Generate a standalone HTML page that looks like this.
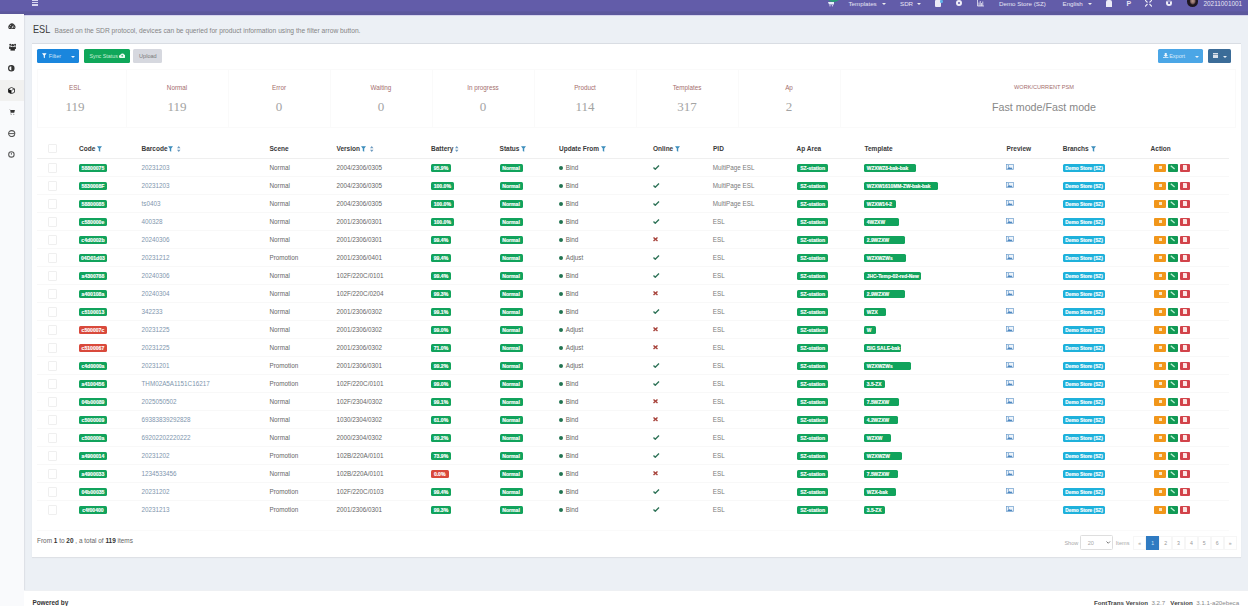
<!DOCTYPE html><html><head><meta charset="utf-8"><style>
*{box-sizing:border-box;margin:0;padding:0}
html,body{width:1248px;height:606px;overflow:hidden;background:#ecf0f5;font-family:"Liberation Sans",sans-serif;position:relative}
.a{position:absolute;white-space:nowrap}
.stv.sans{font-family:"Liberation Sans",sans-serif}
.ic{position:absolute;display:block}
#hdr{position:absolute;left:0;top:0;width:1248px;height:14.6px;background:linear-gradient(#625ca9 0,#625ca9 10.5px,#5c589c 12px,#5c589c 100%);box-shadow:0 1px 0 #d6d4ee}
#side{position:absolute;left:0;top:14px;width:24px;height:592px;background:#f9fafc;box-shadow:1px 0 1px rgba(0,0,20,.06)}
#box{position:absolute;left:32px;top:43px;width:1208.5px;height:514px;background:#fff;border-top:1px solid #d9dde3;box-shadow:0 1px 1px rgba(0,0,0,.06),-0.5px 0 1px rgba(0,0,0,.04)}
#foot{position:absolute;left:24px;top:590px;width:1224px;height:16px;background:#fff;border-top:1px solid #eef0f3}
.bd{position:absolute;height:8.4px;border-radius:1.5px;color:#fff;font-weight:bold;font-size:5.1px;line-height:9.2px;-webkit-text-stroke:0.15px #fff;text-align:center;white-space:nowrap;overflow:hidden}
.g{background:#11a35c}
.r{background:#d9493b}
.td{position:absolute;white-space:nowrap;font-size:6.3px;line-height:8px;color:#666}
.th{position:absolute;white-space:nowrap;font-size:6.5px;line-height:8px;color:#3a3a3a;font-weight:bold}
.lk{color:#8096ae}
.cb{position:absolute;width:9.5px;height:9.5px;border:1px solid #efefef;border-radius:1px;background:#fff}
.hl{position:absolute;left:37px;width:1192px;height:1px;background:#f8f8f8}
.st{position:absolute;top:69px;height:58.5px;border:1px solid #fafafa}
.stl{position:absolute;font-size:6.3px;color:#a46e6e;text-align:center;line-height:9px}
.stv{position:absolute;font-family:"Liberation Serif",serif;font-size:13px;color:#a3a3a3;text-align:center;line-height:12px}
.nv{position:absolute;top:0;font-size:6.2px;line-height:8px;color:#e6e4f4;white-space:nowrap}
.car{position:absolute;width:0;height:0;border-left:2.2px solid transparent;border-right:2.2px solid transparent;border-top:2.4px solid #eee}
.sb{position:absolute;left:8.5px;width:7px;height:7px}
.pg{position:absolute;top:535.5px;height:14.5px;width:13px;border:1px solid #f6f6f6;font-size:5.2px;line-height:12.5px;text-align:center;color:#999}
</style></head><body>

<div id="hdr"></div>
<div id="side"></div>
<div class="a" style="left:0;top:80px;width:24px;height:20.5px;background:#f1f1f0"></div>
<div id="box"></div>
<div id="foot"></div>
<div class="a" style="left:32px;top:0;width:6px;height:6px;background:repeating-linear-gradient(#d8d6f0 0 1px,#615ca9 1px 1.8px)"></div>
<div class="a" style="left:827.5px;top:-4px;width:11px;height:6px;border-radius:50%;background:#2a9a78"></div>
<svg class="ic" style="left:828px;top:2px" width="6" height="4.5" viewBox="0 0 12 9"><path d="M0 0H12V5H2Z" fill="#e6f0fa"/><circle cx="4" cy="7.5" r="1.3" fill="#d8d0f0"/><circle cx="9" cy="7.5" r="1.3" fill="#d8d0f0"/></svg>
<div class="nv" style="left:848.5px">Templates</div>
<div class="car" style="left:881.5px;top:3px"></div>
<div class="nv" style="left:900px">SDR</div>
<div class="car" style="left:916.5px;top:3px"></div>
<div class="a" style="left:934.5px;top:0px;width:6.5px;height:6.5px;background:#eceaf6;border-radius:1px"></div>
<div class="a" style="left:940px;top:0px;width:2.5px;height:2.5px;background:#5fb0e8;border-radius:50%"></div>
<div class="a" style="left:955.8px;top:-0.2px;width:6px;height:6px;border-radius:50%;border:2.2px solid #f0eef8"></div>
<svg class="ic" style="left:976.5px;top:0" width="7" height="6.5" viewBox="0 0 14 13"><path d="M1 0V12H14" fill="none" stroke="#e8e6f4" stroke-width="1.6"/><path d="M4 12V5M6.5 12V2M9 12V6M11.5 12V3" stroke="#e8e6f4" stroke-width="1.6"/></svg>
<div class="nv" style="left:999px">Demo Store (SZ)</div>
<div class="nv" style="left:1062.5px">English</div>
<div class="car" style="left:1087.5px;top:3px"></div>
<div class="a" style="left:1106px;top:0;width:5.5px;height:6.5px;background:#ecebf6;border-radius:2px 2px 0 0"></div>
<div class="nv" style="left:1126.5px;font-size:7px;font-weight:bold">P</div>
<svg class="ic" style="left:1145px;top:0" width="7" height="6.5" viewBox="0 0 14 13"><path d="M0 0L5 5M14 0L9 5M0 13L5 8M14 13L9 8" stroke="#eeedf8" stroke-width="2.2"/></svg>
<div class="a" style="left:1166px;top:0px;width:6px;height:6px;border-radius:50%;border:2px solid #eeedf8;border-top-color:#9995c8"></div>
<div class="a" style="left:1186.5px;top:-4px;width:11.5px;height:11px;border-radius:50%;background:radial-gradient(ellipse 30% 36% at 52% 45%,#b89a90 0,#8a6a66 60%,#1e1620 100%)"></div>
<div class="nv" style="left:1203.5px;font-size:6.4px">20211001001</div>
<svg class="ic" style="left:8.4px;top:22.6px" width="7.8" height="6.6" viewBox="0 0 16 12.5"><path d="M2.2 12A7.2 7.2 0 1 1 13.8 12Z" fill="#3a3a3a"/><path d="M8 10.5L10.8 5.2" stroke="#f9fafc" stroke-width="1.8"/><circle cx="3.5" cy="8" r="1" fill="#f9fafc"/><circle cx="12.5" cy="8" r="1" fill="#f9fafc"/><circle cx="5" cy="4.6" r="1" fill="#f9fafc"/></svg>
<svg class="ic" style="left:8.6px;top:43px" width="7.4" height="7.6" viewBox="0 0 15 15.4"><circle cx="7.5" cy="4.6" r="2.7" fill="#333"/><circle cx="2.6" cy="3.6" r="2.1" fill="#333"/><circle cx="12.4" cy="3.6" r="2.1" fill="#333"/><path d="M0 7H4V12H0Z M11 7H15V12H11Z" fill="#444"/><path d="M3 8.2H12V15.4H3Z" fill="#2a2a2a"/></svg>
<svg class="ic" style="left:8.1px;top:65.3px" width="6.6" height="6.6" viewBox="0 0 13 13"><circle cx="6.5" cy="6.5" r="5.3" fill="none" stroke="#333" stroke-width="2.3"/><path d="M6.5 1.2A5.3 5.3 0 0 1 6.5 11.8Z" fill="#333"/></svg>
<svg class="ic" style="left:8.4px;top:87px" width="7" height="7" viewBox="0 0 14 14"><path d="M7 1L13 3.8V10.6L7 13.4L1 10.6V3.8Z" fill="#f7f7f7" stroke="#222" stroke-width="1.6"/><path d="M1 3.8L7 6.8V13.4L1 10.6Z" fill="#111"/><path d="M7 6.8L13 3.8" stroke="#222" stroke-width="1.3"/></svg>
<svg class="ic" style="left:9.2px;top:108.6px" width="6" height="6" viewBox="0 0 12 12"><path d="M0 0.8H2.3L3.3 7.5H10.5L11.8 1.8H2.5Z" fill="#333"/><path d="M3.3 7.5V9" stroke="#555" stroke-width="1"/><circle cx="4.3" cy="10.6" r="1.1" fill="#666"/><circle cx="9.6" cy="10.6" r="1.1" fill="#666"/></svg>
<svg class="ic" style="left:8.3px;top:129.8px" width="7.4" height="7.2" viewBox="0 0 15 14.6"><ellipse cx="7.5" cy="7.3" rx="6.3" ry="6.1" fill="none" stroke="#555" stroke-width="2.2"/><path d="M1.5 7.3H13.5" stroke="#555" stroke-width="2"/></svg>
<svg class="ic" style="left:8.3px;top:151px" width="6.8" height="6.8" viewBox="0 0 13 13"><circle cx="6.5" cy="6.5" r="5.2" fill="none" stroke="#555" stroke-width="2"/><path d="M6.5 3.5V7" stroke="#555" stroke-width="1.8"/></svg>
<div class="a" style="left:32.8px;top:23px;font-size:11px;line-height:12px;color:#3a3a3a;transform:scaleX(0.83);transform-origin:0 0">ESL</div>
<div class="a" style="left:54.5px;top:25.5px;font-size:6.68px;line-height:9px;color:#858585">Based on the SDR protocol, devices can be queried for product information using the filter arrow button.</div>
<div class="a" style="left:37px;top:49px;width:41.5px;height:14px;background:#1a86dd;border-radius:1.5px"></div>
<svg class="ic" style="left:42px;top:53.3px" width="4.6" height="5.4" viewBox="0 0 9 10"><path d="M0 0H9L5.6 4.5V10L3.4 8.5V4.5Z" fill="#fff"/></svg>
<div class="a" style="left:48.8px;top:52px;font-size:5.5px;line-height:8px;color:#cfe6fb">Filter</div>
<div class="car" style="left:70.5px;top:55.5px;border-top-color:#e8f2fc"></div>
<div class="a" style="left:84px;top:49px;width:46px;height:14.3px;background:#0fa75a;border-radius:1.5px"></div>
<div class="a" style="left:89.4px;top:52px;font-size:5.35px;line-height:8px;color:#c8efd8">Sync Status</div>
<svg class="ic" style="left:119px;top:53px" width="6.4" height="5" viewBox="0 0 13 10"><path d="M3 10A3 3 0 0 1 2.5 4A4.5 4.5 0 0 1 11 3.5A3.2 3.2 0 0 1 10.5 10Z" fill="#eafaf0"/><path d="M6.5 8V4.5M4.8 6L6.5 4.3L8.2 6" stroke="#0fa75a" stroke-width="1.2" fill="none"/></svg>
<div class="a" style="left:133.4px;top:49px;width:28.5px;height:14px;background:#d6d8df;border-radius:1.5px"></div>
<div class="a" style="left:139px;top:52px;font-size:5.6px;line-height:8px;color:#7a7a7a">Upload</div>
<div class="a" style="left:1158px;top:49px;width:44.6px;height:14px;background:#4ba6e6;border-radius:1.5px"></div>
<svg class="ic" style="left:1163px;top:52.6px" width="5.5" height="5" viewBox="0 0 11 10"><path d="M3.5 0H7.5V4H10L5.5 8L1 4H3.5Z" fill="#eef6fd"/><path d="M0 8.5H11V10H0Z" fill="#eef6fd"/></svg>
<div class="a" style="left:1169.2px;top:52px;font-size:5.5px;line-height:8px;color:#dcedfb">Export</div>
<div class="car" style="left:1195px;top:55.5px;border-top-color:#e8f2fc"></div>
<div class="a" style="left:1208px;top:49px;width:23px;height:14px;background:#3b6c98;border-radius:1.5px"></div>
<div class="a" style="left:1212.8px;top:53.3px;width:5.5px;height:5px;background:repeating-linear-gradient(#d8e0ea 0 1.2px,#7f9ab5 1.2px 1.7px)"></div>
<div class="car" style="left:1222.5px;top:55.5px;border-top-color:#e8eef5"></div>
<div class="st" style="left:37px;width:90px"></div>
<div class="stl" style="left:24px;width:102px;top:83px">ESL</div>
<div class="stv" style="left:24px;width:102px;top:101px">119</div>
<div class="st" style="left:126px;width:103px"></div>
<div class="stl" style="left:126px;width:102px;top:83px">Normal</div>
<div class="stv" style="left:126px;width:102px;top:101px">119</div>
<div class="st" style="left:228px;width:103px"></div>
<div class="stl" style="left:228px;width:102px;top:83px">Error</div>
<div class="stv" style="left:228px;width:102px;top:101px">0</div>
<div class="st" style="left:330px;width:103px"></div>
<div class="stl" style="left:330px;width:102px;top:83px">Waiting</div>
<div class="stv" style="left:330px;width:102px;top:101px">0</div>
<div class="st" style="left:432px;width:103px"></div>
<div class="stl" style="left:432px;width:102px;top:83px">In progress</div>
<div class="stv" style="left:432px;width:102px;top:101px">0</div>
<div class="st" style="left:534px;width:103px"></div>
<div class="stl" style="left:534px;width:102px;top:83px">Product</div>
<div class="stv" style="left:534px;width:102px;top:101px">114</div>
<div class="st" style="left:636px;width:103px"></div>
<div class="stl" style="left:636px;width:102px;top:83px">Templates</div>
<div class="stv" style="left:636px;width:102px;top:101px">317</div>
<div class="st" style="left:738px;width:103px"></div>
<div class="stl" style="left:738px;width:102px;top:83px">Ap</div>
<div class="stv" style="left:738px;width:102px;top:101px">2</div>
<div class="st" style="left:840px;width:396px"></div>
<div class="stl" style="left:840px;width:408px;top:83px;font-size:5.6px">WORK/CURRENT PSM</div>
<div class="stv sans" style="left:840px;width:408px;top:101px;font-size:10.7px;color:#888">Fast mode/Fast mode</div>
<div class="cb" style="left:47.5px;top:143.9px"></div>
<div class="th" style="left:79px;top:145.0px">Code</div>
<svg class="ic" style="left:96.6px;top:145.7px" width="5" height="6" viewBox="0 0 9 10"><path d="M0 0H9L5.8 4.3V10L3.2 8.5V4.3Z" fill="#3c8dbc"/></svg>
<div class="th" style="left:141.5px;top:145.0px">Barcode</div>
<svg class="ic" style="left:168.2px;top:145.7px" width="5" height="6" viewBox="0 0 9 10"><path d="M0 0H9L5.8 4.3V10L3.2 8.5V4.3Z" fill="#3c8dbc"/></svg>
<svg class="ic" style="left:177px;top:145.6px" width="3.5" height="6" viewBox="0 0 7 12"><path d="M3.5 0L7 4.5H0Z M3.5 12L7 7.5H0Z" fill="#6f9bbf"/></svg>
<div class="th" style="left:269.5px;top:145.0px">Scene</div>
<div class="th" style="left:336.5px;top:145.0px">Version</div>
<svg class="ic" style="left:360.8px;top:145.7px" width="5" height="6" viewBox="0 0 9 10"><path d="M0 0H9L5.8 4.3V10L3.2 8.5V4.3Z" fill="#3c8dbc"/></svg>
<svg class="ic" style="left:370px;top:145.6px" width="3.5" height="6" viewBox="0 0 7 12"><path d="M3.5 0L7 4.5H0Z M3.5 12L7 7.5H0Z" fill="#6f9bbf"/></svg>
<div class="th" style="left:431px;top:145.0px">Battery</div>
<svg class="ic" style="left:455px;top:145.6px" width="3.5" height="6" viewBox="0 0 7 12"><path d="M3.5 0L7 4.5H0Z M3.5 12L7 7.5H0Z" fill="#6f9bbf"/></svg>
<div class="th" style="left:499.6px;top:145.0px">Status</div>
<svg class="ic" style="left:520.6px;top:145.7px" width="5" height="6" viewBox="0 0 9 10"><path d="M0 0H9L5.8 4.3V10L3.2 8.5V4.3Z" fill="#3c8dbc"/></svg>
<div class="th" style="left:559px;top:145.0px">Update From</div>
<svg class="ic" style="left:600.5px;top:145.7px" width="5" height="6" viewBox="0 0 9 10"><path d="M0 0H9L5.8 4.3V10L3.2 8.5V4.3Z" fill="#3c8dbc"/></svg>
<div class="th" style="left:653px;top:145.0px">Online</div>
<svg class="ic" style="left:675px;top:145.7px" width="5" height="6" viewBox="0 0 9 10"><path d="M0 0H9L5.8 4.3V10L3.2 8.5V4.3Z" fill="#3c8dbc"/></svg>
<div class="th" style="left:713px;top:145.0px">PID</div>
<div class="th" style="left:796.5px;top:145.0px">Ap Area</div>
<div class="th" style="left:864.5px;top:145.0px">Template</div>
<div class="th" style="left:1006.5px;top:145.0px">Preview</div>
<div class="th" style="left:1062.7px;top:145.0px">Branchs</div>
<svg class="ic" style="left:1090.8px;top:145.7px" width="5" height="6" viewBox="0 0 9 10"><path d="M0 0H9L5.8 4.3V10L3.2 8.5V4.3Z" fill="#3c8dbc"/></svg>
<div class="th" style="left:1150.6px;top:145.0px">Action</div>
<div class="hl" style="top:157.5px;background:#efefef"></div>
<div class="cb" style="left:47.5px;top:163.0px"></div>
<div class="bd g" style="left:79.2px;top:163.50px;width:27.5px;">58800075</div>
<div class="td lk" style="left:141.5px;top:163.7px">20231203</div>
<div class="td" style="left:269.5px;top:163.7px">Normal</div>
<div class="td" style="left:336.5px;top:163.7px">2004/2306/0305</div>
<div class="bd g" style="left:430.8px;top:163.50px;width:20.4px;">95.9%</div>
<div class="bd g" style="left:499.6px;top:163.50px;width:23px;">Normal</div>
<div class="a" style="left:559.2px;top:165.7px;width:3.9px;height:4px;border-radius:50%;background:#237452"></div>
<div class="td" style="left:565.7px;top:163.7px">Bind</div>
<svg class="ic" style="left:653px;top:164.9px" width="6.5" height="5" viewBox="0 0 13 10"><path d="M1 5L4.5 8.5L12 1" fill="none" stroke="#2f7358" stroke-width="2.8"/></svg>
<div class="td" style="left:712.8px;top:163.7px;color:#7a7a7a">MultiPage ESL</div>
<div class="bd g" style="left:797.3px;top:163.50px;width:30.7px;">SZ-station</div>
<div class="bd g" style="left:864.3px;top:163.50px;width:52px;font-size:4.9px;text-align:left;padding-left:2.5px">WZXWZ8-bak-bak</div>
<svg class="ic" style="left:1006.3px;top:164.2px" width="7.8" height="6" viewBox="0 0 16 12"><rect x="0.7" y="0.7" width="14.6" height="10.6" fill="#eef4fa" stroke="#6a9ccc" stroke-width="1.4"/><path d="M2.5 10L6 5.5L8.5 8L10.5 6.5L13.5 10Z" fill="#4b86c0"/><circle cx="5" cy="3.8" r="1.2" fill="#4b86c0"/></svg>
<div class="bd" style="left:1062.8px;top:163.50px;width:42.6px;background:#1eb1db;font-size:4.8px">Demo Store (SZ)</div>
<div class="a" style="left:1154.2px;top:163.5px;width:11.7px;height:8.5px;background:#f1961a;border-radius:1px"></div>
<div class="a" style="left:1158.6px;top:166.1px;width:3px;height:3.2px;background:#f9e3c0"></div>
<div class="a" style="left:1168px;top:163.5px;width:10px;height:8.5px;background:#119a55;border-radius:1px"></div>
<svg class="ic" style="left:1170.2px;top:165.1px" width="5.4" height="4.8" viewBox="0 0 11 10"><path d="M1.5 1.5L9.5 8.5" stroke="#bff0d6" stroke-width="2.6"/></svg>
<div class="a" style="left:1179.8px;top:163.5px;width:10.4px;height:8.5px;background:#d2434a;border-radius:1px"></div>
<div class="a" style="left:1183.3px;top:165.3px;width:3.4px;height:4.8px;background:#fbe4e2;border-radius:0 1px 0 0"></div>
<div class="hl" style="top:176.3px"></div>
<div class="cb" style="left:47.5px;top:181.0px"></div>
<div class="bd g" style="left:79.2px;top:181.50px;width:27.5px;">5830008F</div>
<div class="td lk" style="left:141.5px;top:181.7px">20231203</div>
<div class="td" style="left:269.5px;top:181.7px">Normal</div>
<div class="td" style="left:336.5px;top:181.7px">2004/2306/0305</div>
<div class="bd g" style="left:430.8px;top:181.50px;width:23px;">100.0%</div>
<div class="bd g" style="left:499.6px;top:181.50px;width:23px;">Normal</div>
<div class="a" style="left:559.2px;top:183.7px;width:3.9px;height:4px;border-radius:50%;background:#237452"></div>
<div class="td" style="left:565.7px;top:181.7px">Bind</div>
<svg class="ic" style="left:653px;top:182.9px" width="6.5" height="5" viewBox="0 0 13 10"><path d="M1 5L4.5 8.5L12 1" fill="none" stroke="#2f7358" stroke-width="2.8"/></svg>
<div class="td" style="left:712.8px;top:181.7px;color:#7a7a7a">MultiPage ESL</div>
<div class="bd g" style="left:797.3px;top:181.50px;width:30.7px;">SZ-station</div>
<div class="bd g" style="left:864.3px;top:181.50px;width:74px;font-size:4.9px;text-align:left;padding-left:2.5px">WZXW1610MM-ZW-bak-bak</div>
<svg class="ic" style="left:1006.3px;top:182.2px" width="7.8" height="6" viewBox="0 0 16 12"><rect x="0.7" y="0.7" width="14.6" height="10.6" fill="#eef4fa" stroke="#6a9ccc" stroke-width="1.4"/><path d="M2.5 10L6 5.5L8.5 8L10.5 6.5L13.5 10Z" fill="#4b86c0"/><circle cx="5" cy="3.8" r="1.2" fill="#4b86c0"/></svg>
<div class="bd" style="left:1062.8px;top:181.50px;width:42.6px;background:#1eb1db;font-size:4.8px">Demo Store (SZ)</div>
<div class="a" style="left:1154.2px;top:181.5px;width:11.7px;height:8.5px;background:#f1961a;border-radius:1px"></div>
<div class="a" style="left:1158.6px;top:184.1px;width:3px;height:3.2px;background:#f9e3c0"></div>
<div class="a" style="left:1168px;top:181.5px;width:10px;height:8.5px;background:#119a55;border-radius:1px"></div>
<svg class="ic" style="left:1170.2px;top:183.1px" width="5.4" height="4.8" viewBox="0 0 11 10"><path d="M1.5 1.5L9.5 8.5" stroke="#bff0d6" stroke-width="2.6"/></svg>
<div class="a" style="left:1179.8px;top:181.5px;width:10.4px;height:8.5px;background:#d2434a;border-radius:1px"></div>
<div class="a" style="left:1183.3px;top:183.3px;width:3.4px;height:4.8px;background:#fbe4e2;border-radius:0 1px 0 0"></div>
<div class="hl" style="top:194.3px"></div>
<div class="cb" style="left:47.5px;top:199.0px"></div>
<div class="bd g" style="left:79.2px;top:199.50px;width:27.5px;">58800085</div>
<div class="td lk" style="left:141.5px;top:199.7px">ts0403</div>
<div class="td" style="left:269.5px;top:199.7px">Normal</div>
<div class="td" style="left:336.5px;top:199.7px">2004/2306/0305</div>
<div class="bd g" style="left:430.8px;top:199.50px;width:23px;">100.0%</div>
<div class="bd g" style="left:499.6px;top:199.50px;width:23px;">Normal</div>
<div class="a" style="left:559.2px;top:201.7px;width:3.9px;height:4px;border-radius:50%;background:#237452"></div>
<div class="td" style="left:565.7px;top:199.7px">Bind</div>
<svg class="ic" style="left:653px;top:200.9px" width="6.5" height="5" viewBox="0 0 13 10"><path d="M1 5L4.5 8.5L12 1" fill="none" stroke="#2f7358" stroke-width="2.8"/></svg>
<div class="td" style="left:712.8px;top:199.7px;color:#7a7a7a">MultiPage ESL</div>
<div class="bd g" style="left:797.3px;top:199.50px;width:30.7px;">SZ-station</div>
<div class="bd g" style="left:864.3px;top:199.50px;width:32px;font-size:4.9px;text-align:left;padding-left:2.5px">WZXW14-2</div>
<svg class="ic" style="left:1006.3px;top:200.2px" width="7.8" height="6" viewBox="0 0 16 12"><rect x="0.7" y="0.7" width="14.6" height="10.6" fill="#eef4fa" stroke="#6a9ccc" stroke-width="1.4"/><path d="M2.5 10L6 5.5L8.5 8L10.5 6.5L13.5 10Z" fill="#4b86c0"/><circle cx="5" cy="3.8" r="1.2" fill="#4b86c0"/></svg>
<div class="bd" style="left:1062.8px;top:199.50px;width:42.6px;background:#1eb1db;font-size:4.8px">Demo Store (SZ)</div>
<div class="a" style="left:1154.2px;top:199.5px;width:11.7px;height:8.5px;background:#f1961a;border-radius:1px"></div>
<div class="a" style="left:1158.6px;top:202.1px;width:3px;height:3.2px;background:#f9e3c0"></div>
<div class="a" style="left:1168px;top:199.5px;width:10px;height:8.5px;background:#119a55;border-radius:1px"></div>
<svg class="ic" style="left:1170.2px;top:201.1px" width="5.4" height="4.8" viewBox="0 0 11 10"><path d="M1.5 1.5L9.5 8.5" stroke="#bff0d6" stroke-width="2.6"/></svg>
<div class="a" style="left:1179.8px;top:199.5px;width:10.4px;height:8.5px;background:#d2434a;border-radius:1px"></div>
<div class="a" style="left:1183.3px;top:201.3px;width:3.4px;height:4.8px;background:#fbe4e2;border-radius:0 1px 0 0"></div>
<div class="hl" style="top:212.3px"></div>
<div class="cb" style="left:47.5px;top:217.0px"></div>
<div class="bd g" style="left:79.2px;top:217.50px;width:27.5px;">c580000e</div>
<div class="td lk" style="left:141.5px;top:217.7px">400328</div>
<div class="td" style="left:269.5px;top:217.7px">Normal</div>
<div class="td" style="left:336.5px;top:217.7px">2001/2306/0301</div>
<div class="bd g" style="left:430.8px;top:217.50px;width:23px;">100.0%</div>
<div class="bd g" style="left:499.6px;top:217.50px;width:23px;">Normal</div>
<div class="a" style="left:559.2px;top:219.7px;width:3.9px;height:4px;border-radius:50%;background:#237452"></div>
<div class="td" style="left:565.7px;top:217.7px">Bind</div>
<svg class="ic" style="left:653px;top:218.9px" width="6.5" height="5" viewBox="0 0 13 10"><path d="M1 5L4.5 8.5L12 1" fill="none" stroke="#2f7358" stroke-width="2.8"/></svg>
<div class="td" style="left:712.8px;top:217.7px;color:#7a7a7a">ESL</div>
<div class="bd g" style="left:797.3px;top:217.50px;width:30.7px;">SZ-station</div>
<div class="bd g" style="left:864.3px;top:217.50px;width:35px;font-size:4.9px;text-align:left;padding-left:2.5px">4WZXW</div>
<svg class="ic" style="left:1006.3px;top:218.2px" width="7.8" height="6" viewBox="0 0 16 12"><rect x="0.7" y="0.7" width="14.6" height="10.6" fill="#eef4fa" stroke="#6a9ccc" stroke-width="1.4"/><path d="M2.5 10L6 5.5L8.5 8L10.5 6.5L13.5 10Z" fill="#4b86c0"/><circle cx="5" cy="3.8" r="1.2" fill="#4b86c0"/></svg>
<div class="bd" style="left:1062.8px;top:217.50px;width:42.6px;background:#1eb1db;font-size:4.8px">Demo Store (SZ)</div>
<div class="a" style="left:1154.2px;top:217.5px;width:11.7px;height:8.5px;background:#f1961a;border-radius:1px"></div>
<div class="a" style="left:1158.6px;top:220.1px;width:3px;height:3.2px;background:#f9e3c0"></div>
<div class="a" style="left:1168px;top:217.5px;width:10px;height:8.5px;background:#119a55;border-radius:1px"></div>
<svg class="ic" style="left:1170.2px;top:219.1px" width="5.4" height="4.8" viewBox="0 0 11 10"><path d="M1.5 1.5L9.5 8.5" stroke="#bff0d6" stroke-width="2.6"/></svg>
<div class="a" style="left:1179.8px;top:217.5px;width:10.4px;height:8.5px;background:#d2434a;border-radius:1px"></div>
<div class="a" style="left:1183.3px;top:219.3px;width:3.4px;height:4.8px;background:#fbe4e2;border-radius:0 1px 0 0"></div>
<div class="hl" style="top:230.3px"></div>
<div class="cb" style="left:47.5px;top:235.0px"></div>
<div class="bd g" style="left:79.2px;top:235.50px;width:27.5px;">c4d0002b</div>
<div class="td lk" style="left:141.5px;top:235.7px">20240306</div>
<div class="td" style="left:269.5px;top:235.7px">Normal</div>
<div class="td" style="left:336.5px;top:235.7px">2001/2306/0301</div>
<div class="bd g" style="left:430.8px;top:235.50px;width:20.4px;">99.4%</div>
<div class="bd g" style="left:499.6px;top:235.50px;width:23px;">Normal</div>
<div class="a" style="left:559.2px;top:237.7px;width:3.9px;height:4px;border-radius:50%;background:#237452"></div>
<div class="td" style="left:565.7px;top:235.7px">Bind</div>
<svg class="ic" style="left:652.9px;top:237.0px" width="5" height="4.6" viewBox="0 0 10 9.2"><path d="M1 1L9 8.2M9 1L1 8.2" stroke="#a8443c" stroke-width="2.8"/></svg>
<div class="td" style="left:712.8px;top:235.7px;color:#7a7a7a">ESL</div>
<div class="bd g" style="left:797.3px;top:235.50px;width:30.7px;">SZ-station</div>
<div class="bd g" style="left:864.3px;top:235.50px;width:41px;font-size:4.9px;text-align:left;padding-left:2.5px">2.9WZXW</div>
<svg class="ic" style="left:1006.3px;top:236.2px" width="7.8" height="6" viewBox="0 0 16 12"><rect x="0.7" y="0.7" width="14.6" height="10.6" fill="#eef4fa" stroke="#6a9ccc" stroke-width="1.4"/><path d="M2.5 10L6 5.5L8.5 8L10.5 6.5L13.5 10Z" fill="#4b86c0"/><circle cx="5" cy="3.8" r="1.2" fill="#4b86c0"/></svg>
<div class="bd" style="left:1062.8px;top:235.50px;width:42.6px;background:#1eb1db;font-size:4.8px">Demo Store (SZ)</div>
<div class="a" style="left:1154.2px;top:235.5px;width:11.7px;height:8.5px;background:#f1961a;border-radius:1px"></div>
<div class="a" style="left:1158.6px;top:238.1px;width:3px;height:3.2px;background:#f9e3c0"></div>
<div class="a" style="left:1168px;top:235.5px;width:10px;height:8.5px;background:#119a55;border-radius:1px"></div>
<svg class="ic" style="left:1170.2px;top:237.1px" width="5.4" height="4.8" viewBox="0 0 11 10"><path d="M1.5 1.5L9.5 8.5" stroke="#bff0d6" stroke-width="2.6"/></svg>
<div class="a" style="left:1179.8px;top:235.5px;width:10.4px;height:8.5px;background:#d2434a;border-radius:1px"></div>
<div class="a" style="left:1183.3px;top:237.3px;width:3.4px;height:4.8px;background:#fbe4e2;border-radius:0 1px 0 0"></div>
<div class="hl" style="top:248.3px"></div>
<div class="cb" style="left:47.5px;top:253.0px"></div>
<div class="bd g" style="left:79.2px;top:253.50px;width:27.5px;">04D01d03</div>
<div class="td lk" style="left:141.5px;top:253.7px">20231212</div>
<div class="td" style="left:269.5px;top:253.7px">Promotion</div>
<div class="td" style="left:336.5px;top:253.7px">2001/2306/0401</div>
<div class="bd g" style="left:430.8px;top:253.50px;width:20.4px;">99.4%</div>
<div class="bd g" style="left:499.6px;top:253.50px;width:23px;">Normal</div>
<div class="a" style="left:559.2px;top:255.7px;width:3.9px;height:4px;border-radius:50%;background:#237452"></div>
<div class="td" style="left:565.7px;top:253.7px">Adjust</div>
<svg class="ic" style="left:653px;top:254.9px" width="6.5" height="5" viewBox="0 0 13 10"><path d="M1 5L4.5 8.5L12 1" fill="none" stroke="#2f7358" stroke-width="2.8"/></svg>
<div class="td" style="left:712.8px;top:253.7px;color:#7a7a7a">ESL</div>
<div class="bd g" style="left:797.3px;top:253.50px;width:30.7px;">SZ-station</div>
<div class="bd g" style="left:864.3px;top:253.50px;width:42px;font-size:4.9px;text-align:left;padding-left:2.5px">WZXWZWs</div>
<svg class="ic" style="left:1006.3px;top:254.2px" width="7.8" height="6" viewBox="0 0 16 12"><rect x="0.7" y="0.7" width="14.6" height="10.6" fill="#eef4fa" stroke="#6a9ccc" stroke-width="1.4"/><path d="M2.5 10L6 5.5L8.5 8L10.5 6.5L13.5 10Z" fill="#4b86c0"/><circle cx="5" cy="3.8" r="1.2" fill="#4b86c0"/></svg>
<div class="bd" style="left:1062.8px;top:253.50px;width:42.6px;background:#1eb1db;font-size:4.8px">Demo Store (SZ)</div>
<div class="a" style="left:1154.2px;top:253.5px;width:11.7px;height:8.5px;background:#f1961a;border-radius:1px"></div>
<div class="a" style="left:1158.6px;top:256.1px;width:3px;height:3.2px;background:#f9e3c0"></div>
<div class="a" style="left:1168px;top:253.5px;width:10px;height:8.5px;background:#119a55;border-radius:1px"></div>
<svg class="ic" style="left:1170.2px;top:255.1px" width="5.4" height="4.8" viewBox="0 0 11 10"><path d="M1.5 1.5L9.5 8.5" stroke="#bff0d6" stroke-width="2.6"/></svg>
<div class="a" style="left:1179.8px;top:253.5px;width:10.4px;height:8.5px;background:#d2434a;border-radius:1px"></div>
<div class="a" style="left:1183.3px;top:255.3px;width:3.4px;height:4.8px;background:#fbe4e2;border-radius:0 1px 0 0"></div>
<div class="hl" style="top:266.3px"></div>
<div class="cb" style="left:47.5px;top:271.0px"></div>
<div class="bd g" style="left:79.2px;top:271.50px;width:27.5px;">a4300788</div>
<div class="td lk" style="left:141.5px;top:271.7px">20240306</div>
<div class="td" style="left:269.5px;top:271.7px">Normal</div>
<div class="td" style="left:336.5px;top:271.7px">102F/220C/0101</div>
<div class="bd g" style="left:430.8px;top:271.50px;width:20.4px;">99.4%</div>
<div class="bd g" style="left:499.6px;top:271.50px;width:23px;">Normal</div>
<div class="a" style="left:559.2px;top:273.7px;width:3.9px;height:4px;border-radius:50%;background:#237452"></div>
<div class="td" style="left:565.7px;top:271.7px">Bind</div>
<svg class="ic" style="left:653px;top:272.9px" width="6.5" height="5" viewBox="0 0 13 10"><path d="M1 5L4.5 8.5L12 1" fill="none" stroke="#2f7358" stroke-width="2.8"/></svg>
<div class="td" style="left:712.8px;top:271.7px;color:#7a7a7a">ESL</div>
<div class="bd g" style="left:797.3px;top:271.50px;width:30.7px;">SZ-station</div>
<div class="bd g" style="left:864.3px;top:271.50px;width:57px;font-size:4.9px;text-align:left;padding-left:2.5px">JHC-Temp-02-red-New</div>
<svg class="ic" style="left:1006.3px;top:272.2px" width="7.8" height="6" viewBox="0 0 16 12"><rect x="0.7" y="0.7" width="14.6" height="10.6" fill="#eef4fa" stroke="#6a9ccc" stroke-width="1.4"/><path d="M2.5 10L6 5.5L8.5 8L10.5 6.5L13.5 10Z" fill="#4b86c0"/><circle cx="5" cy="3.8" r="1.2" fill="#4b86c0"/></svg>
<div class="bd" style="left:1062.8px;top:271.50px;width:42.6px;background:#1eb1db;font-size:4.8px">Demo Store (SZ)</div>
<div class="a" style="left:1154.2px;top:271.5px;width:11.7px;height:8.5px;background:#f1961a;border-radius:1px"></div>
<div class="a" style="left:1158.6px;top:274.1px;width:3px;height:3.2px;background:#f9e3c0"></div>
<div class="a" style="left:1168px;top:271.5px;width:10px;height:8.5px;background:#119a55;border-radius:1px"></div>
<svg class="ic" style="left:1170.2px;top:273.1px" width="5.4" height="4.8" viewBox="0 0 11 10"><path d="M1.5 1.5L9.5 8.5" stroke="#bff0d6" stroke-width="2.6"/></svg>
<div class="a" style="left:1179.8px;top:271.5px;width:10.4px;height:8.5px;background:#d2434a;border-radius:1px"></div>
<div class="a" style="left:1183.3px;top:273.3px;width:3.4px;height:4.8px;background:#fbe4e2;border-radius:0 1px 0 0"></div>
<div class="hl" style="top:284.3px"></div>
<div class="cb" style="left:47.5px;top:289.0px"></div>
<div class="bd g" style="left:79.2px;top:289.50px;width:27.5px;">a400108a</div>
<div class="td lk" style="left:141.5px;top:289.7px">20240304</div>
<div class="td" style="left:269.5px;top:289.7px">Normal</div>
<div class="td" style="left:336.5px;top:289.7px">102F/220C/0204</div>
<div class="bd g" style="left:430.8px;top:289.50px;width:20.4px;">99.3%</div>
<div class="bd g" style="left:499.6px;top:289.50px;width:23px;">Normal</div>
<div class="a" style="left:559.2px;top:291.7px;width:3.9px;height:4px;border-radius:50%;background:#237452"></div>
<div class="td" style="left:565.7px;top:289.7px">Bind</div>
<svg class="ic" style="left:652.9px;top:291.0px" width="5" height="4.6" viewBox="0 0 10 9.2"><path d="M1 1L9 8.2M9 1L1 8.2" stroke="#a8443c" stroke-width="2.8"/></svg>
<div class="td" style="left:712.8px;top:289.7px;color:#7a7a7a">ESL</div>
<div class="bd g" style="left:797.3px;top:289.50px;width:30.7px;">SZ-station</div>
<div class="bd g" style="left:864.3px;top:289.50px;width:41px;font-size:4.9px;text-align:left;padding-left:2.5px">2.9WZXW</div>
<svg class="ic" style="left:1006.3px;top:290.2px" width="7.8" height="6" viewBox="0 0 16 12"><rect x="0.7" y="0.7" width="14.6" height="10.6" fill="#eef4fa" stroke="#6a9ccc" stroke-width="1.4"/><path d="M2.5 10L6 5.5L8.5 8L10.5 6.5L13.5 10Z" fill="#4b86c0"/><circle cx="5" cy="3.8" r="1.2" fill="#4b86c0"/></svg>
<div class="bd" style="left:1062.8px;top:289.50px;width:42.6px;background:#1eb1db;font-size:4.8px">Demo Store (SZ)</div>
<div class="a" style="left:1154.2px;top:289.5px;width:11.7px;height:8.5px;background:#f1961a;border-radius:1px"></div>
<div class="a" style="left:1158.6px;top:292.1px;width:3px;height:3.2px;background:#f9e3c0"></div>
<div class="a" style="left:1168px;top:289.5px;width:10px;height:8.5px;background:#119a55;border-radius:1px"></div>
<svg class="ic" style="left:1170.2px;top:291.1px" width="5.4" height="4.8" viewBox="0 0 11 10"><path d="M1.5 1.5L9.5 8.5" stroke="#bff0d6" stroke-width="2.6"/></svg>
<div class="a" style="left:1179.8px;top:289.5px;width:10.4px;height:8.5px;background:#d2434a;border-radius:1px"></div>
<div class="a" style="left:1183.3px;top:291.3px;width:3.4px;height:4.8px;background:#fbe4e2;border-radius:0 1px 0 0"></div>
<div class="hl" style="top:302.3px"></div>
<div class="cb" style="left:47.5px;top:307.0px"></div>
<div class="bd g" style="left:79.2px;top:307.50px;width:27.5px;">c5100013</div>
<div class="td lk" style="left:141.5px;top:307.7px">342233</div>
<div class="td" style="left:269.5px;top:307.7px">Normal</div>
<div class="td" style="left:336.5px;top:307.7px">2001/2306/0302</div>
<div class="bd g" style="left:430.8px;top:307.50px;width:20.4px;">99.1%</div>
<div class="bd g" style="left:499.6px;top:307.50px;width:23px;">Normal</div>
<div class="a" style="left:559.2px;top:309.7px;width:3.9px;height:4px;border-radius:50%;background:#237452"></div>
<div class="td" style="left:565.7px;top:307.7px">Bind</div>
<svg class="ic" style="left:653px;top:308.9px" width="6.5" height="5" viewBox="0 0 13 10"><path d="M1 5L4.5 8.5L12 1" fill="none" stroke="#2f7358" stroke-width="2.8"/></svg>
<div class="td" style="left:712.8px;top:307.7px;color:#7a7a7a">ESL</div>
<div class="bd g" style="left:797.3px;top:307.50px;width:30.7px;">SZ-station</div>
<div class="bd g" style="left:864.3px;top:307.50px;width:22px;font-size:4.9px;text-align:left;padding-left:2.5px">WZX</div>
<svg class="ic" style="left:1006.3px;top:308.2px" width="7.8" height="6" viewBox="0 0 16 12"><rect x="0.7" y="0.7" width="14.6" height="10.6" fill="#eef4fa" stroke="#6a9ccc" stroke-width="1.4"/><path d="M2.5 10L6 5.5L8.5 8L10.5 6.5L13.5 10Z" fill="#4b86c0"/><circle cx="5" cy="3.8" r="1.2" fill="#4b86c0"/></svg>
<div class="bd" style="left:1062.8px;top:307.50px;width:42.6px;background:#1eb1db;font-size:4.8px">Demo Store (SZ)</div>
<div class="a" style="left:1154.2px;top:307.5px;width:11.7px;height:8.5px;background:#f1961a;border-radius:1px"></div>
<div class="a" style="left:1158.6px;top:310.1px;width:3px;height:3.2px;background:#f9e3c0"></div>
<div class="a" style="left:1168px;top:307.5px;width:10px;height:8.5px;background:#119a55;border-radius:1px"></div>
<svg class="ic" style="left:1170.2px;top:309.1px" width="5.4" height="4.8" viewBox="0 0 11 10"><path d="M1.5 1.5L9.5 8.5" stroke="#bff0d6" stroke-width="2.6"/></svg>
<div class="a" style="left:1179.8px;top:307.5px;width:10.4px;height:8.5px;background:#d2434a;border-radius:1px"></div>
<div class="a" style="left:1183.3px;top:309.3px;width:3.4px;height:4.8px;background:#fbe4e2;border-radius:0 1px 0 0"></div>
<div class="hl" style="top:320.3px"></div>
<div class="cb" style="left:47.5px;top:325.0px"></div>
<div class="bd r" style="left:79.2px;top:325.50px;width:27.5px;">c500007c</div>
<div class="td lk" style="left:141.5px;top:325.7px">20231225</div>
<div class="td" style="left:269.5px;top:325.7px">Normal</div>
<div class="td" style="left:336.5px;top:325.7px">2001/2306/0302</div>
<div class="bd g" style="left:430.8px;top:325.50px;width:20.4px;">99.0%</div>
<div class="bd g" style="left:499.6px;top:325.50px;width:23px;">Normal</div>
<div class="a" style="left:559.2px;top:327.7px;width:3.9px;height:4px;border-radius:50%;background:#237452"></div>
<div class="td" style="left:565.7px;top:325.7px">Adjust</div>
<svg class="ic" style="left:652.9px;top:327.0px" width="5" height="4.6" viewBox="0 0 10 9.2"><path d="M1 1L9 8.2M9 1L1 8.2" stroke="#a8443c" stroke-width="2.8"/></svg>
<div class="td" style="left:712.8px;top:325.7px;color:#7a7a7a">ESL</div>
<div class="bd g" style="left:797.3px;top:325.50px;width:30.7px;">SZ-station</div>
<div class="bd g" style="left:864.3px;top:325.50px;width:12px;font-size:4.9px;text-align:left;padding-left:2.5px">W</div>
<svg class="ic" style="left:1006.3px;top:326.2px" width="7.8" height="6" viewBox="0 0 16 12"><rect x="0.7" y="0.7" width="14.6" height="10.6" fill="#eef4fa" stroke="#6a9ccc" stroke-width="1.4"/><path d="M2.5 10L6 5.5L8.5 8L10.5 6.5L13.5 10Z" fill="#4b86c0"/><circle cx="5" cy="3.8" r="1.2" fill="#4b86c0"/></svg>
<div class="bd" style="left:1062.8px;top:325.50px;width:42.6px;background:#1eb1db;font-size:4.8px">Demo Store (SZ)</div>
<div class="a" style="left:1154.2px;top:325.5px;width:11.7px;height:8.5px;background:#f1961a;border-radius:1px"></div>
<div class="a" style="left:1158.6px;top:328.1px;width:3px;height:3.2px;background:#f9e3c0"></div>
<div class="a" style="left:1168px;top:325.5px;width:10px;height:8.5px;background:#119a55;border-radius:1px"></div>
<svg class="ic" style="left:1170.2px;top:327.1px" width="5.4" height="4.8" viewBox="0 0 11 10"><path d="M1.5 1.5L9.5 8.5" stroke="#bff0d6" stroke-width="2.6"/></svg>
<div class="a" style="left:1179.8px;top:325.5px;width:10.4px;height:8.5px;background:#d2434a;border-radius:1px"></div>
<div class="a" style="left:1183.3px;top:327.3px;width:3.4px;height:4.8px;background:#fbe4e2;border-radius:0 1px 0 0"></div>
<div class="hl" style="top:338.3px"></div>
<div class="cb" style="left:47.5px;top:343.0px"></div>
<div class="bd r" style="left:79.2px;top:343.50px;width:27.5px;">c5100067</div>
<div class="td lk" style="left:141.5px;top:343.7px">20231225</div>
<div class="td" style="left:269.5px;top:343.7px">Normal</div>
<div class="td" style="left:336.5px;top:343.7px">2001/2306/0302</div>
<div class="bd g" style="left:430.8px;top:343.50px;width:20.4px;">71.0%</div>
<div class="bd g" style="left:499.6px;top:343.50px;width:23px;">Normal</div>
<div class="a" style="left:559.2px;top:345.7px;width:3.9px;height:4px;border-radius:50%;background:#237452"></div>
<div class="td" style="left:565.7px;top:343.7px">Adjust</div>
<svg class="ic" style="left:652.9px;top:345.0px" width="5" height="4.6" viewBox="0 0 10 9.2"><path d="M1 1L9 8.2M9 1L1 8.2" stroke="#a8443c" stroke-width="2.8"/></svg>
<div class="td" style="left:712.8px;top:343.7px;color:#7a7a7a">ESL</div>
<div class="bd g" style="left:797.3px;top:343.50px;width:30.7px;">SZ-station</div>
<div class="bd g" style="left:864.3px;top:343.50px;width:37px;font-size:4.9px;text-align:left;padding-left:2.5px">BIG SALE-bak</div>
<svg class="ic" style="left:1006.3px;top:344.2px" width="7.8" height="6" viewBox="0 0 16 12"><rect x="0.7" y="0.7" width="14.6" height="10.6" fill="#eef4fa" stroke="#6a9ccc" stroke-width="1.4"/><path d="M2.5 10L6 5.5L8.5 8L10.5 6.5L13.5 10Z" fill="#4b86c0"/><circle cx="5" cy="3.8" r="1.2" fill="#4b86c0"/></svg>
<div class="bd" style="left:1062.8px;top:343.50px;width:42.6px;background:#1eb1db;font-size:4.8px">Demo Store (SZ)</div>
<div class="a" style="left:1154.2px;top:343.5px;width:11.7px;height:8.5px;background:#f1961a;border-radius:1px"></div>
<div class="a" style="left:1158.6px;top:346.1px;width:3px;height:3.2px;background:#f9e3c0"></div>
<div class="a" style="left:1168px;top:343.5px;width:10px;height:8.5px;background:#119a55;border-radius:1px"></div>
<svg class="ic" style="left:1170.2px;top:345.1px" width="5.4" height="4.8" viewBox="0 0 11 10"><path d="M1.5 1.5L9.5 8.5" stroke="#bff0d6" stroke-width="2.6"/></svg>
<div class="a" style="left:1179.8px;top:343.5px;width:10.4px;height:8.5px;background:#d2434a;border-radius:1px"></div>
<div class="a" style="left:1183.3px;top:345.3px;width:3.4px;height:4.8px;background:#fbe4e2;border-radius:0 1px 0 0"></div>
<div class="hl" style="top:356.3px"></div>
<div class="cb" style="left:47.5px;top:361.0px"></div>
<div class="bd g" style="left:79.2px;top:361.50px;width:27.5px;">c4d0000a</div>
<div class="td lk" style="left:141.5px;top:361.7px">20231201</div>
<div class="td" style="left:269.5px;top:361.7px">Promotion</div>
<div class="td" style="left:336.5px;top:361.7px">2001/2306/0301</div>
<div class="bd g" style="left:430.8px;top:361.50px;width:20.4px;">99.2%</div>
<div class="bd g" style="left:499.6px;top:361.50px;width:23px;">Normal</div>
<div class="a" style="left:559.2px;top:363.7px;width:3.9px;height:4px;border-radius:50%;background:#237452"></div>
<div class="td" style="left:565.7px;top:361.7px">Adjust</div>
<svg class="ic" style="left:653px;top:362.9px" width="6.5" height="5" viewBox="0 0 13 10"><path d="M1 5L4.5 8.5L12 1" fill="none" stroke="#2f7358" stroke-width="2.8"/></svg>
<div class="td" style="left:712.8px;top:361.7px;color:#7a7a7a">ESL</div>
<div class="bd g" style="left:797.3px;top:361.50px;width:30.7px;">SZ-station</div>
<div class="bd g" style="left:864.3px;top:361.50px;width:47px;font-size:4.9px;text-align:left;padding-left:2.5px">WZXWZWs</div>
<svg class="ic" style="left:1006.3px;top:362.2px" width="7.8" height="6" viewBox="0 0 16 12"><rect x="0.7" y="0.7" width="14.6" height="10.6" fill="#eef4fa" stroke="#6a9ccc" stroke-width="1.4"/><path d="M2.5 10L6 5.5L8.5 8L10.5 6.5L13.5 10Z" fill="#4b86c0"/><circle cx="5" cy="3.8" r="1.2" fill="#4b86c0"/></svg>
<div class="bd" style="left:1062.8px;top:361.50px;width:42.6px;background:#1eb1db;font-size:4.8px">Demo Store (SZ)</div>
<div class="a" style="left:1154.2px;top:361.5px;width:11.7px;height:8.5px;background:#f1961a;border-radius:1px"></div>
<div class="a" style="left:1158.6px;top:364.1px;width:3px;height:3.2px;background:#f9e3c0"></div>
<div class="a" style="left:1168px;top:361.5px;width:10px;height:8.5px;background:#119a55;border-radius:1px"></div>
<svg class="ic" style="left:1170.2px;top:363.1px" width="5.4" height="4.8" viewBox="0 0 11 10"><path d="M1.5 1.5L9.5 8.5" stroke="#bff0d6" stroke-width="2.6"/></svg>
<div class="a" style="left:1179.8px;top:361.5px;width:10.4px;height:8.5px;background:#d2434a;border-radius:1px"></div>
<div class="a" style="left:1183.3px;top:363.3px;width:3.4px;height:4.8px;background:#fbe4e2;border-radius:0 1px 0 0"></div>
<div class="hl" style="top:374.3px"></div>
<div class="cb" style="left:47.5px;top:379.0px"></div>
<div class="bd g" style="left:79.2px;top:379.50px;width:27.5px;">a4100456</div>
<div class="td lk" style="left:141.5px;top:379.7px">THM02A5A1151C16217</div>
<div class="td" style="left:269.5px;top:379.7px">Promotion</div>
<div class="td" style="left:336.5px;top:379.7px">102F/220C/0101</div>
<div class="bd g" style="left:430.8px;top:379.50px;width:20.4px;">99.0%</div>
<div class="bd g" style="left:499.6px;top:379.50px;width:23px;">Normal</div>
<div class="a" style="left:559.2px;top:381.7px;width:3.9px;height:4px;border-radius:50%;background:#237452"></div>
<div class="td" style="left:565.7px;top:379.7px">Bind</div>
<svg class="ic" style="left:653px;top:380.9px" width="6.5" height="5" viewBox="0 0 13 10"><path d="M1 5L4.5 8.5L12 1" fill="none" stroke="#2f7358" stroke-width="2.8"/></svg>
<div class="td" style="left:712.8px;top:379.7px;color:#7a7a7a">ESL</div>
<div class="bd g" style="left:797.3px;top:379.50px;width:30.7px;">SZ-station</div>
<div class="bd g" style="left:864.3px;top:379.50px;width:21px;font-size:4.9px;text-align:left;padding-left:2.5px">3.5-ZX</div>
<svg class="ic" style="left:1006.3px;top:380.2px" width="7.8" height="6" viewBox="0 0 16 12"><rect x="0.7" y="0.7" width="14.6" height="10.6" fill="#eef4fa" stroke="#6a9ccc" stroke-width="1.4"/><path d="M2.5 10L6 5.5L8.5 8L10.5 6.5L13.5 10Z" fill="#4b86c0"/><circle cx="5" cy="3.8" r="1.2" fill="#4b86c0"/></svg>
<div class="bd" style="left:1062.8px;top:379.50px;width:42.6px;background:#1eb1db;font-size:4.8px">Demo Store (SZ)</div>
<div class="a" style="left:1154.2px;top:379.5px;width:11.7px;height:8.5px;background:#f1961a;border-radius:1px"></div>
<div class="a" style="left:1158.6px;top:382.1px;width:3px;height:3.2px;background:#f9e3c0"></div>
<div class="a" style="left:1168px;top:379.5px;width:10px;height:8.5px;background:#119a55;border-radius:1px"></div>
<svg class="ic" style="left:1170.2px;top:381.1px" width="5.4" height="4.8" viewBox="0 0 11 10"><path d="M1.5 1.5L9.5 8.5" stroke="#bff0d6" stroke-width="2.6"/></svg>
<div class="a" style="left:1179.8px;top:379.5px;width:10.4px;height:8.5px;background:#d2434a;border-radius:1px"></div>
<div class="a" style="left:1183.3px;top:381.3px;width:3.4px;height:4.8px;background:#fbe4e2;border-radius:0 1px 0 0"></div>
<div class="hl" style="top:392.3px"></div>
<div class="cb" style="left:47.5px;top:397.0px"></div>
<div class="bd g" style="left:79.2px;top:397.50px;width:27.5px;">04b00089</div>
<div class="td lk" style="left:141.5px;top:397.7px">2025050502</div>
<div class="td" style="left:269.5px;top:397.7px">Normal</div>
<div class="td" style="left:336.5px;top:397.7px">102F/2304/0302</div>
<div class="bd g" style="left:430.8px;top:397.50px;width:20.4px;">99.1%</div>
<div class="bd g" style="left:499.6px;top:397.50px;width:23px;">Normal</div>
<div class="a" style="left:559.2px;top:399.7px;width:3.9px;height:4px;border-radius:50%;background:#237452"></div>
<div class="td" style="left:565.7px;top:397.7px">Bind</div>
<svg class="ic" style="left:652.9px;top:399.0px" width="5" height="4.6" viewBox="0 0 10 9.2"><path d="M1 1L9 8.2M9 1L1 8.2" stroke="#a8443c" stroke-width="2.8"/></svg>
<div class="td" style="left:712.8px;top:397.7px;color:#7a7a7a">ESL</div>
<div class="bd g" style="left:797.3px;top:397.50px;width:30.7px;">SZ-station</div>
<div class="bd g" style="left:864.3px;top:397.50px;width:35px;font-size:4.9px;text-align:left;padding-left:2.5px">7.5WZXW</div>
<svg class="ic" style="left:1006.3px;top:398.2px" width="7.8" height="6" viewBox="0 0 16 12"><rect x="0.7" y="0.7" width="14.6" height="10.6" fill="#eef4fa" stroke="#6a9ccc" stroke-width="1.4"/><path d="M2.5 10L6 5.5L8.5 8L10.5 6.5L13.5 10Z" fill="#4b86c0"/><circle cx="5" cy="3.8" r="1.2" fill="#4b86c0"/></svg>
<div class="bd" style="left:1062.8px;top:397.50px;width:42.6px;background:#1eb1db;font-size:4.8px">Demo Store (SZ)</div>
<div class="a" style="left:1154.2px;top:397.5px;width:11.7px;height:8.5px;background:#f1961a;border-radius:1px"></div>
<div class="a" style="left:1158.6px;top:400.1px;width:3px;height:3.2px;background:#f9e3c0"></div>
<div class="a" style="left:1168px;top:397.5px;width:10px;height:8.5px;background:#119a55;border-radius:1px"></div>
<svg class="ic" style="left:1170.2px;top:399.1px" width="5.4" height="4.8" viewBox="0 0 11 10"><path d="M1.5 1.5L9.5 8.5" stroke="#bff0d6" stroke-width="2.6"/></svg>
<div class="a" style="left:1179.8px;top:397.5px;width:10.4px;height:8.5px;background:#d2434a;border-radius:1px"></div>
<div class="a" style="left:1183.3px;top:399.3px;width:3.4px;height:4.8px;background:#fbe4e2;border-radius:0 1px 0 0"></div>
<div class="hl" style="top:410.3px"></div>
<div class="cb" style="left:47.5px;top:415.0px"></div>
<div class="bd g" style="left:79.2px;top:415.50px;width:27.5px;">c5000009</div>
<div class="td lk" style="left:141.5px;top:415.7px">69383839292828</div>
<div class="td" style="left:269.5px;top:415.7px">Normal</div>
<div class="td" style="left:336.5px;top:415.7px">1030/2304/0302</div>
<div class="bd g" style="left:430.8px;top:415.50px;width:20.4px;">61.0%</div>
<div class="bd g" style="left:499.6px;top:415.50px;width:23px;">Normal</div>
<div class="a" style="left:559.2px;top:417.7px;width:3.9px;height:4px;border-radius:50%;background:#237452"></div>
<div class="td" style="left:565.7px;top:415.7px">Bind</div>
<svg class="ic" style="left:652.9px;top:417.0px" width="5" height="4.6" viewBox="0 0 10 9.2"><path d="M1 1L9 8.2M9 1L1 8.2" stroke="#a8443c" stroke-width="2.8"/></svg>
<div class="td" style="left:712.8px;top:415.7px;color:#7a7a7a">ESL</div>
<div class="bd g" style="left:797.3px;top:415.50px;width:30.7px;">SZ-station</div>
<div class="bd g" style="left:864.3px;top:415.50px;width:34px;font-size:4.9px;text-align:left;padding-left:2.5px">4.2WZXW</div>
<svg class="ic" style="left:1006.3px;top:416.2px" width="7.8" height="6" viewBox="0 0 16 12"><rect x="0.7" y="0.7" width="14.6" height="10.6" fill="#eef4fa" stroke="#6a9ccc" stroke-width="1.4"/><path d="M2.5 10L6 5.5L8.5 8L10.5 6.5L13.5 10Z" fill="#4b86c0"/><circle cx="5" cy="3.8" r="1.2" fill="#4b86c0"/></svg>
<div class="bd" style="left:1062.8px;top:415.50px;width:42.6px;background:#1eb1db;font-size:4.8px">Demo Store (SZ)</div>
<div class="a" style="left:1154.2px;top:415.5px;width:11.7px;height:8.5px;background:#f1961a;border-radius:1px"></div>
<div class="a" style="left:1158.6px;top:418.1px;width:3px;height:3.2px;background:#f9e3c0"></div>
<div class="a" style="left:1168px;top:415.5px;width:10px;height:8.5px;background:#119a55;border-radius:1px"></div>
<svg class="ic" style="left:1170.2px;top:417.1px" width="5.4" height="4.8" viewBox="0 0 11 10"><path d="M1.5 1.5L9.5 8.5" stroke="#bff0d6" stroke-width="2.6"/></svg>
<div class="a" style="left:1179.8px;top:415.5px;width:10.4px;height:8.5px;background:#d2434a;border-radius:1px"></div>
<div class="a" style="left:1183.3px;top:417.3px;width:3.4px;height:4.8px;background:#fbe4e2;border-radius:0 1px 0 0"></div>
<div class="hl" style="top:428.3px"></div>
<div class="cb" style="left:47.5px;top:433.0px"></div>
<div class="bd g" style="left:79.2px;top:433.50px;width:27.5px;">c500000a</div>
<div class="td lk" style="left:141.5px;top:433.7px">69202202220222</div>
<div class="td" style="left:269.5px;top:433.7px">Normal</div>
<div class="td" style="left:336.5px;top:433.7px">2000/2304/0302</div>
<div class="bd g" style="left:430.8px;top:433.50px;width:20.4px;">99.2%</div>
<div class="bd g" style="left:499.6px;top:433.50px;width:23px;">Normal</div>
<div class="a" style="left:559.2px;top:435.7px;width:3.9px;height:4px;border-radius:50%;background:#237452"></div>
<div class="td" style="left:565.7px;top:433.7px">Bind</div>
<svg class="ic" style="left:653px;top:434.9px" width="6.5" height="5" viewBox="0 0 13 10"><path d="M1 5L4.5 8.5L12 1" fill="none" stroke="#2f7358" stroke-width="2.8"/></svg>
<div class="td" style="left:712.8px;top:433.7px;color:#7a7a7a">ESL</div>
<div class="bd g" style="left:797.3px;top:433.50px;width:30.7px;">SZ-station</div>
<div class="bd g" style="left:864.3px;top:433.50px;width:27px;font-size:4.9px;text-align:left;padding-left:2.5px">WZXW</div>
<svg class="ic" style="left:1006.3px;top:434.2px" width="7.8" height="6" viewBox="0 0 16 12"><rect x="0.7" y="0.7" width="14.6" height="10.6" fill="#eef4fa" stroke="#6a9ccc" stroke-width="1.4"/><path d="M2.5 10L6 5.5L8.5 8L10.5 6.5L13.5 10Z" fill="#4b86c0"/><circle cx="5" cy="3.8" r="1.2" fill="#4b86c0"/></svg>
<div class="bd" style="left:1062.8px;top:433.50px;width:42.6px;background:#1eb1db;font-size:4.8px">Demo Store (SZ)</div>
<div class="a" style="left:1154.2px;top:433.5px;width:11.7px;height:8.5px;background:#f1961a;border-radius:1px"></div>
<div class="a" style="left:1158.6px;top:436.1px;width:3px;height:3.2px;background:#f9e3c0"></div>
<div class="a" style="left:1168px;top:433.5px;width:10px;height:8.5px;background:#119a55;border-radius:1px"></div>
<svg class="ic" style="left:1170.2px;top:435.1px" width="5.4" height="4.8" viewBox="0 0 11 10"><path d="M1.5 1.5L9.5 8.5" stroke="#bff0d6" stroke-width="2.6"/></svg>
<div class="a" style="left:1179.8px;top:433.5px;width:10.4px;height:8.5px;background:#d2434a;border-radius:1px"></div>
<div class="a" style="left:1183.3px;top:435.3px;width:3.4px;height:4.8px;background:#fbe4e2;border-radius:0 1px 0 0"></div>
<div class="hl" style="top:446.3px"></div>
<div class="cb" style="left:47.5px;top:451.0px"></div>
<div class="bd g" style="left:79.2px;top:451.50px;width:27.5px;">a4900014</div>
<div class="td lk" style="left:141.5px;top:451.7px">20231202</div>
<div class="td" style="left:269.5px;top:451.7px">Promotion</div>
<div class="td" style="left:336.5px;top:451.7px">102B/220A/0101</div>
<div class="bd g" style="left:430.8px;top:451.50px;width:20.4px;">73.9%</div>
<div class="bd g" style="left:499.6px;top:451.50px;width:23px;">Normal</div>
<div class="a" style="left:559.2px;top:453.7px;width:3.9px;height:4px;border-radius:50%;background:#237452"></div>
<div class="td" style="left:565.7px;top:451.7px">Bind</div>
<svg class="ic" style="left:653px;top:452.9px" width="6.5" height="5" viewBox="0 0 13 10"><path d="M1 5L4.5 8.5L12 1" fill="none" stroke="#2f7358" stroke-width="2.8"/></svg>
<div class="td" style="left:712.8px;top:451.7px;color:#7a7a7a">ESL</div>
<div class="bd g" style="left:797.3px;top:451.50px;width:30.7px;">SZ-station</div>
<div class="bd g" style="left:864.3px;top:451.50px;width:38px;font-size:4.9px;text-align:left;padding-left:2.5px">WZXWZW</div>
<svg class="ic" style="left:1006.3px;top:452.2px" width="7.8" height="6" viewBox="0 0 16 12"><rect x="0.7" y="0.7" width="14.6" height="10.6" fill="#eef4fa" stroke="#6a9ccc" stroke-width="1.4"/><path d="M2.5 10L6 5.5L8.5 8L10.5 6.5L13.5 10Z" fill="#4b86c0"/><circle cx="5" cy="3.8" r="1.2" fill="#4b86c0"/></svg>
<div class="bd" style="left:1062.8px;top:451.50px;width:42.6px;background:#1eb1db;font-size:4.8px">Demo Store (SZ)</div>
<div class="a" style="left:1154.2px;top:451.5px;width:11.7px;height:8.5px;background:#f1961a;border-radius:1px"></div>
<div class="a" style="left:1158.6px;top:454.1px;width:3px;height:3.2px;background:#f9e3c0"></div>
<div class="a" style="left:1168px;top:451.5px;width:10px;height:8.5px;background:#119a55;border-radius:1px"></div>
<svg class="ic" style="left:1170.2px;top:453.1px" width="5.4" height="4.8" viewBox="0 0 11 10"><path d="M1.5 1.5L9.5 8.5" stroke="#bff0d6" stroke-width="2.6"/></svg>
<div class="a" style="left:1179.8px;top:451.5px;width:10.4px;height:8.5px;background:#d2434a;border-radius:1px"></div>
<div class="a" style="left:1183.3px;top:453.3px;width:3.4px;height:4.8px;background:#fbe4e2;border-radius:0 1px 0 0"></div>
<div class="hl" style="top:464.3px"></div>
<div class="cb" style="left:47.5px;top:469.0px"></div>
<div class="bd g" style="left:79.2px;top:469.50px;width:27.5px;">a4900033</div>
<div class="td lk" style="left:141.5px;top:469.7px">1234533456</div>
<div class="td" style="left:269.5px;top:469.7px">Normal</div>
<div class="td" style="left:336.5px;top:469.7px">102B/220A/0101</div>
<div class="bd r" style="left:430.8px;top:469.50px;width:17.8px;">0.0%</div>
<div class="bd g" style="left:499.6px;top:469.50px;width:23px;">Normal</div>
<div class="a" style="left:559.2px;top:471.7px;width:3.9px;height:4px;border-radius:50%;background:#237452"></div>
<div class="td" style="left:565.7px;top:469.7px">Bind</div>
<svg class="ic" style="left:652.9px;top:471.0px" width="5" height="4.6" viewBox="0 0 10 9.2"><path d="M1 1L9 8.2M9 1L1 8.2" stroke="#a8443c" stroke-width="2.8"/></svg>
<div class="td" style="left:712.8px;top:469.7px;color:#7a7a7a">ESL</div>
<div class="bd g" style="left:797.3px;top:469.50px;width:30.7px;">SZ-station</div>
<div class="bd g" style="left:864.3px;top:469.50px;width:34px;font-size:4.9px;text-align:left;padding-left:2.5px">7.5WZXW</div>
<svg class="ic" style="left:1006.3px;top:470.2px" width="7.8" height="6" viewBox="0 0 16 12"><rect x="0.7" y="0.7" width="14.6" height="10.6" fill="#eef4fa" stroke="#6a9ccc" stroke-width="1.4"/><path d="M2.5 10L6 5.5L8.5 8L10.5 6.5L13.5 10Z" fill="#4b86c0"/><circle cx="5" cy="3.8" r="1.2" fill="#4b86c0"/></svg>
<div class="bd" style="left:1062.8px;top:469.50px;width:42.6px;background:#1eb1db;font-size:4.8px">Demo Store (SZ)</div>
<div class="a" style="left:1154.2px;top:469.5px;width:11.7px;height:8.5px;background:#f1961a;border-radius:1px"></div>
<div class="a" style="left:1158.6px;top:472.1px;width:3px;height:3.2px;background:#f9e3c0"></div>
<div class="a" style="left:1168px;top:469.5px;width:10px;height:8.5px;background:#119a55;border-radius:1px"></div>
<svg class="ic" style="left:1170.2px;top:471.1px" width="5.4" height="4.8" viewBox="0 0 11 10"><path d="M1.5 1.5L9.5 8.5" stroke="#bff0d6" stroke-width="2.6"/></svg>
<div class="a" style="left:1179.8px;top:469.5px;width:10.4px;height:8.5px;background:#d2434a;border-radius:1px"></div>
<div class="a" style="left:1183.3px;top:471.3px;width:3.4px;height:4.8px;background:#fbe4e2;border-radius:0 1px 0 0"></div>
<div class="hl" style="top:482.3px"></div>
<div class="cb" style="left:47.5px;top:487.0px"></div>
<div class="bd g" style="left:79.2px;top:487.50px;width:27.5px;">04b00035</div>
<div class="td lk" style="left:141.5px;top:487.7px">20231202</div>
<div class="td" style="left:269.5px;top:487.7px">Promotion</div>
<div class="td" style="left:336.5px;top:487.7px">102F/220C/0103</div>
<div class="bd g" style="left:430.8px;top:487.50px;width:20.4px;">99.4%</div>
<div class="bd g" style="left:499.6px;top:487.50px;width:23px;">Normal</div>
<div class="a" style="left:559.2px;top:489.7px;width:3.9px;height:4px;border-radius:50%;background:#237452"></div>
<div class="td" style="left:565.7px;top:487.7px">Bind</div>
<svg class="ic" style="left:653px;top:488.9px" width="6.5" height="5" viewBox="0 0 13 10"><path d="M1 5L4.5 8.5L12 1" fill="none" stroke="#2f7358" stroke-width="2.8"/></svg>
<div class="td" style="left:712.8px;top:487.7px;color:#7a7a7a">ESL</div>
<div class="bd g" style="left:797.3px;top:487.50px;width:30.7px;">SZ-station</div>
<div class="bd g" style="left:864.3px;top:487.50px;width:32px;font-size:4.9px;text-align:left;padding-left:2.5px">WZX-bak</div>
<svg class="ic" style="left:1006.3px;top:488.2px" width="7.8" height="6" viewBox="0 0 16 12"><rect x="0.7" y="0.7" width="14.6" height="10.6" fill="#eef4fa" stroke="#6a9ccc" stroke-width="1.4"/><path d="M2.5 10L6 5.5L8.5 8L10.5 6.5L13.5 10Z" fill="#4b86c0"/><circle cx="5" cy="3.8" r="1.2" fill="#4b86c0"/></svg>
<div class="bd" style="left:1062.8px;top:487.50px;width:42.6px;background:#1eb1db;font-size:4.8px">Demo Store (SZ)</div>
<div class="a" style="left:1154.2px;top:487.5px;width:11.7px;height:8.5px;background:#f1961a;border-radius:1px"></div>
<div class="a" style="left:1158.6px;top:490.1px;width:3px;height:3.2px;background:#f9e3c0"></div>
<div class="a" style="left:1168px;top:487.5px;width:10px;height:8.5px;background:#119a55;border-radius:1px"></div>
<svg class="ic" style="left:1170.2px;top:489.1px" width="5.4" height="4.8" viewBox="0 0 11 10"><path d="M1.5 1.5L9.5 8.5" stroke="#bff0d6" stroke-width="2.6"/></svg>
<div class="a" style="left:1179.8px;top:487.5px;width:10.4px;height:8.5px;background:#d2434a;border-radius:1px"></div>
<div class="a" style="left:1183.3px;top:489.3px;width:3.4px;height:4.8px;background:#fbe4e2;border-radius:0 1px 0 0"></div>
<div class="hl" style="top:500.3px"></div>
<div class="cb" style="left:47.5px;top:505.0px"></div>
<div class="bd g" style="left:79.2px;top:505.50px;width:27.5px;">c4f00400</div>
<div class="td lk" style="left:141.5px;top:505.7px">20231213</div>
<div class="td" style="left:269.5px;top:505.7px">Promotion</div>
<div class="td" style="left:336.5px;top:505.7px">2001/2306/0301</div>
<div class="bd g" style="left:430.8px;top:505.50px;width:20.4px;">99.3%</div>
<div class="bd g" style="left:499.6px;top:505.50px;width:23px;">Normal</div>
<div class="a" style="left:559.2px;top:507.7px;width:3.9px;height:4px;border-radius:50%;background:#237452"></div>
<div class="td" style="left:565.7px;top:505.7px">Bind</div>
<svg class="ic" style="left:653px;top:506.9px" width="6.5" height="5" viewBox="0 0 13 10"><path d="M1 5L4.5 8.5L12 1" fill="none" stroke="#2f7358" stroke-width="2.8"/></svg>
<div class="td" style="left:712.8px;top:505.7px;color:#7a7a7a">ESL</div>
<div class="bd g" style="left:797.3px;top:505.50px;width:30.7px;">SZ-station</div>
<div class="bd g" style="left:864.3px;top:505.50px;width:21px;font-size:4.9px;text-align:left;padding-left:2.5px">3.5-ZX</div>
<svg class="ic" style="left:1006.3px;top:506.2px" width="7.8" height="6" viewBox="0 0 16 12"><rect x="0.7" y="0.7" width="14.6" height="10.6" fill="#eef4fa" stroke="#6a9ccc" stroke-width="1.4"/><path d="M2.5 10L6 5.5L8.5 8L10.5 6.5L13.5 10Z" fill="#4b86c0"/><circle cx="5" cy="3.8" r="1.2" fill="#4b86c0"/></svg>
<div class="bd" style="left:1062.8px;top:505.50px;width:42.6px;background:#1eb1db;font-size:4.8px">Demo Store (SZ)</div>
<div class="a" style="left:1154.2px;top:505.5px;width:11.7px;height:8.5px;background:#f1961a;border-radius:1px"></div>
<div class="a" style="left:1158.6px;top:508.1px;width:3px;height:3.2px;background:#f9e3c0"></div>
<div class="a" style="left:1168px;top:505.5px;width:10px;height:8.5px;background:#119a55;border-radius:1px"></div>
<svg class="ic" style="left:1170.2px;top:507.1px" width="5.4" height="4.8" viewBox="0 0 11 10"><path d="M1.5 1.5L9.5 8.5" stroke="#bff0d6" stroke-width="2.6"/></svg>
<div class="a" style="left:1179.8px;top:505.5px;width:10.4px;height:8.5px;background:#d2434a;border-radius:1px"></div>
<div class="a" style="left:1183.3px;top:507.3px;width:3.4px;height:4.8px;background:#fbe4e2;border-radius:0 1px 0 0"></div>
<div class="hl" style="top:530px;background:#fafafa"></div>
<div class="a" style="left:37px;top:536.8px;font-size:6.45px;line-height:8px;color:#666">From <b style="color:#333">1</b> to <b style="color:#333">20</b> , a total of <b style="color:#333">119</b> items</div>
<div class="a" style="left:1064.4px;top:539px;font-size:5.6px;line-height:8px;color:#aaa">Show</div>
<div class="a" style="left:1080px;top:535.3px;width:33px;height:14.7px;border:1px solid #dedede;border-radius:1.5px;background:#fff"></div>
<div class="a" style="left:1087.7px;top:539px;font-size:5.6px;line-height:8px;color:#aaa">20</div>
<svg class="ic" style="left:1106px;top:541px" width="4.5" height="3" viewBox="0 0 9 6"><path d="M1 1L4.5 4.5L8 1" fill="none" stroke="#555" stroke-width="1.6"/></svg>
<div class="a" style="left:1115.8px;top:539px;font-size:5.6px;line-height:8px;color:#aaa">Items</div>
<div class="pg" style="left:1133.3px">&laquo;</div>
<div class="pg" style="left:1146.2px;background:#2f7bc2;border-color:#2f7bc2;color:#d0e4f6">1</div>
<div class="pg" style="left:1159.1px">2</div>
<div class="pg" style="left:1172.0px">3</div>
<div class="pg" style="left:1184.9px">4</div>
<div class="pg" style="left:1197.8px">5</div>
<div class="pg" style="left:1210.7px">6</div>
<div class="pg" style="left:1223.6px">&raquo;</div>
<div class="a" style="left:32.4px;top:598.5px;font-size:6.4px;line-height:8px;color:#333;font-weight:bold">Powered by</div>
<div class="a" style="left:1094px;top:598.5px;font-size:6.2px;line-height:8px;color:#888"><b style="color:#444">FontTrans Version</b>&nbsp; 3.2.7 &nbsp;&nbsp;<b style="color:#444">Version</b>&nbsp; 3.1.1-a20ebeca</div>
</body></html>
